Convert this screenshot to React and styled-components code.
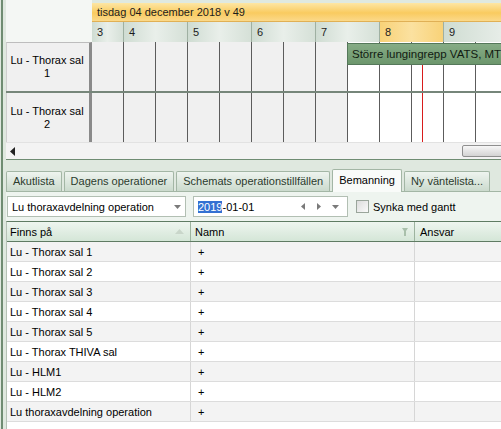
import styled, { createGlobalStyle } from "styled-components";

const GlobalStyle = createGlobalStyle`
  html, body {
    margin: 0;
    padding: 0;
  }
  body {
    width: 501px;
    height: 429px;
    overflow: hidden;
    background: #dfe8df;
    font-family: "Liberation Sans", Arial, sans-serif;
    font-size: 11px;
    color: #000;
  }
  * {
    box-sizing: border-box;
  }
`;

const Frame = styled.div`
  height: 429px;
  margin-left: 1px;
  padding-left: 3px;
  border-left: 2px solid #6f8c72;
  display: flex;
  flex-direction: column;
  overflow: hidden;
`;

/* ---------- gantt ---------- */

const Gantt = styled.div`
  display: flex;
  flex-direction: column;
  background: #f4f7f4;
  width: 600px;
`;

const GanttHead = styled.div`
  display: flex;
  height: 42px;
`;

const Corner = styled.div`
  flex: none;
  width: 86px;
  background: #f4f7f4;
`;

const Timeline = styled.div`
  flex: 1;
  display: flex;
  flex-direction: column;
  padding-top: 3px;
  background: #dfe9e0;
`;

const DateBand = styled.div`
  height: 19px;
  line-height: 19px;
  padding-left: 5px;
  white-space: nowrap;
  color: #1c1c1c;
  background: linear-gradient(#fde6a4, #f9cb60 55%, #fbd98a);
  border-bottom: 1px solid #e0b055;
`;

const HourRow = styled.div`
  display: flex;
  height: 20px;
`;

const HourCell = styled.div`
  flex: none;
  width: ${({ $w }) => $w}px;
  padding-left: 5px;
  line-height: 20px;
  color: #1c1c1c;
  border-left: ${({ $first }) => ($first ? "none" : "1px solid #9fb0a2")};
  background: ${({ $now }) =>
    $now
      ? "linear-gradient(90deg, #f8d278, #fbe1a0 50%, #f8d278)"
      : "linear-gradient(90deg, #cfdcd2, #e9efea 50%, #d5e0d7)"};
`;

const GanttRow = styled.div`
  display: flex;
  height: ${({ $h }) => $h}px;
  border-bottom: ${({ $sep }) => ($sep ? "2px solid #76867a" : "none")};
`;

const RowHeader = styled.div`
  flex: none;
  width: 86px;
  display: flex;
  align-items: center;
  justify-content: center;
  text-align: center;
  line-height: 13px;
  background: #f0f0f0;
  border-left: 1px solid #cfcfcf;
  border-top: ${({ $top }) => ($top ? "1px solid #bdbdbd" : "none")};
  border-right: 3px solid #8a8a8a;
  padding-right: 2px;
`;

const Slots = styled.div`
  position: relative;
  flex: 1;
  display: flex;
`;

const Slot = styled.div`
  flex: none;
  width: ${({ $first }) => ($first ? 31 : 32)}px;
  border-left: ${({ $first }) => ($first ? "none" : "1px solid #5c5c5c")};
  background: ${({ $work }) => ($work ? "#ffffff" : "#f0f0f0")};
`;

const EventBar = styled.div`
  position: absolute;
  left: 255px;
  top: 1px;
  right: 0;
  height: 22px;
  line-height: 20px;
  padding-left: 4px;
  white-space: nowrap;
  font-size: 11.5px;
  color: #111a11;
  background: linear-gradient(#86ac86, #6c966c);
  border: 1px solid #55785a;
`;

const NowLine = styled.div`
  position: absolute;
  left: 330px;
  top: ${({ $top }) => $top}px;
  bottom: 0;
  width: 1px;
  background: #d81c1c;
`;

const ScrollBar = styled.div`
  height: 17px;
  display: flex;
  align-items: center;
  padding-left: 4px;
  background: #f3f3f3;
  border-top: 1px solid #e2e2e2;
`;

const Thumb = styled.div`
  margin-left: auto;
  margin-right: 84px;
  width: 60px;
  height: 12px;
  border: 1px solid #8f8f8f;
  border-radius: 2px;
  background: linear-gradient(#f7f7f7, #d3d3d3);
`;

/* ---------- lower pane ---------- */

const Splitter = styled.div`
  flex: none;
  height: 11px;
  border-top: 1px solid #6f8c72;
  background: #dfe8df;
`;

const TabBar = styled.div`
  flex: none;
  display: flex;
  align-items: flex-end;
  gap: 2px;
  height: 21px;
  white-space: nowrap;
`;

const Tab = styled.div`
  flex: none;
  height: ${({ $active }) => ($active ? 23 : 20)}px;
  padding: 0 6px;
  line-height: ${({ $active }) => ($active ? 21 : 19)}px;
  color: ${({ $active }) => ($active ? "#000" : "#2b3b2d")};
  border: 1px solid #a3b6a5;
  border-bottom: none;
  border-radius: 2px 2px 0 0;
  background: ${({ $active }) =>
    $active ? "#f9fbf9" : "linear-gradient(#eef4ef, #cbdacd)"};
  margin-bottom: ${({ $active }) => ($active ? -1 : 0)}px;
  position: relative;
`;

const Toolbar = styled.div`
  flex: none;
  height: 30px;
  display: flex;
  align-items: center;
  padding-left: 1px;
  background: #eef4ef;
  border-top: 1px solid #a3b6a5;
`;

const Field = styled.div`
  flex: none;
  width: ${({ $w }) => $w}px;
  height: 21px;
  margin-right: 7px;
  display: flex;
  align-items: center;
  padding: 0 4px;
  background: #fff;
  border: 1px solid #b2bfb3;
  white-space: nowrap;
`;

const FieldText = styled.span`
  flex: 1;
`;

const Selected = styled.span`
  background: #3370d2;
  color: #fff;
`;

const Spin = styled.span`
  display: inline-flex;
  width: 16px;
  justify-content: center;
  color: #7a7a7a;
`;

const CheckBox = styled.span`
  flex: none;
  width: 13px;
  height: 13px;
  margin-left: 1px;
  margin-right: 4px;
  border: 1px solid #9aa59b;
  background: linear-gradient(135deg, #dcdcdc, #fafafa);
`;

const Label = styled.span`
  white-space: nowrap;
`;

const Grid = styled.div`
  flex: 1;
  background: #fff;
  border-top: 1px solid #5f7b63;
  border-left: 1px solid #b5c2b6;
  width: 600px;
`;

const GridRow = styled.div`
  display: grid;
  grid-template-columns: 184px 224px 1fr;
  height: 20px;
  background: ${({ $odd }) => ($odd ? "#f3f3f3" : "#ffffff")};
  border-bottom: 1px solid #dcdcdc;
`;

const HeaderRow = styled(GridRow)`
  background: linear-gradient(#eef5ef, #d4e6d7);
  border-bottom: 1px solid #5f7b63;
`;

const Cell = styled.div`
  display: flex;
  align-items: center;
  padding-left: ${({ $pad }) => $pad ?? 3}px;
  padding-right: 6px;
  white-space: nowrap;
  border-right: 1px solid ${({ $head }) => ($head ? "#9db39f" : "#d6d6d6")};
`;

const HeadText = styled.span`
  flex: 1;
`;

const ArrowLeft = () => (
  <svg width="6" height="9" viewBox="0 0 6 9">
    <path d="M5 0 L0 4.5 L5 9 Z" fill="#222" />
  </svg>
);

const SmallTri = ({ dir, color = "#7a7a7a" }) => {
  const paths = {
    left: "M4 0 L0 3.5 L4 7 Z",
    right: "M0 0 L4 3.5 L0 7 Z",
    down: "M0 0 L7 0 L3.5 4 Z",
  };
  const size = dir === "down" ? [7, 4] : [4, 7];
  return (
    <svg width={size[0]} height={size[1]} viewBox={`0 0 ${size[0]} ${size[1]}`}>
      <path d={paths[dir]} fill={color} />
    </svg>
  );
};

const SortUp = () => (
  <svg width="9" height="5" viewBox="0 0 9 5">
    <path d="M4.5 0 L9 5 L0 5 Z" fill="#c9d6ca" />
  </svg>
);

const Funnel = () => (
  <svg width="6" height="8" viewBox="0 0 6 8">
    <path d="M0 0 H6 L4 3 V8 H2 V3 Z" fill="#a9c0ab" />
  </svg>
);

const hours = [
  { label: "3", w: 31 },
  { label: "4", w: 64 },
  { label: "5", w: 64 },
  { label: "6", w: 64 },
  { label: "7", w: 64 },
  { label: "8", w: 64, now: true },
  { label: "9", w: 128 },
];

const slots = Array.from({ length: 16 }, (_, i) => i);

const rooms = [
  "Lu - Thorax sal 1",
  "Lu - Thorax sal 2",
  "Lu - Thorax sal 3",
  "Lu - Thorax sal 4",
  "Lu - Thorax sal 5",
  "Lu - Thorax THIVA sal",
  "Lu - HLM1",
  "Lu - HLM2",
  "Lu thoraxavdelning operation",
];

const tabs = [
  "Akutlista",
  "Dagens operationer",
  "Schemats operationstillfällen",
  "Bemanning",
  "Ny väntelista...",
];

const ganttRows = [
  { name: "Lu - Thorax sal", no: "1", h: 51, sep: true, event: true, lineTop: 23 },
  { name: "Lu - Thorax sal", no: "2", h: 49, sep: false, event: false, lineTop: 0 },
];

export default function App() {
  return (
    <>
      <GlobalStyle />
      <Frame>
        <Gantt>
          <GanttHead>
            <Corner />
            <Timeline>
              <DateBand>tisdag 04 december 2018 v 49</DateBand>
              <HourRow>
                {hours.map((h, i) => (
                  <HourCell key={h.label} $w={h.w} $now={h.now} $first={i === 0}>
                    {h.label}
                  </HourCell>
                ))}
              </HourRow>
            </Timeline>
          </GanttHead>
          {ganttRows.map((r, ri) => (
            <GanttRow key={r.no} $h={r.h} $sep={r.sep}>
              <RowHeader $top={ri === 0}>
                {r.name}
                <br />
                {r.no}
              </RowHeader>
              <Slots>
                {slots.map((i) => (
                  <Slot key={i} $first={i === 0} $work={i >= 8} />
                ))}
                {r.event && <EventBar>Större lungingrepp VATS, MT</EventBar>}
                <NowLine $top={r.lineTop} />
              </Slots>
            </GanttRow>
          ))}
          <ScrollBar>
            <ArrowLeft />
            <Thumb />
          </ScrollBar>
        </Gantt>

        <Splitter />
        <TabBar>
          {tabs.map((t) => (
            <Tab key={t} $active={t === "Bemanning"}>
              {t}
            </Tab>
          ))}
        </TabBar>
        <Toolbar>
          <Field $w={179}>
            <FieldText>Lu thoraxavdelning operation</FieldText>
            <SmallTri dir="down" />
          </Field>
          <Field $w={155}>
            <FieldText>
              <Selected>2019</Selected>-01-01
            </FieldText>
            <Spin>
              <SmallTri dir="left" />
            </Spin>
            <Spin>
              <SmallTri dir="right" />
            </Spin>
            <Spin>
              <SmallTri dir="down" />
            </Spin>
          </Field>
          <CheckBox />
          <Label>Synka med gantt</Label>
        </Toolbar>
        <Grid>
          <HeaderRow>
            <Cell $head>
              <HeadText>Finns på</HeadText>
              <SortUp />
            </Cell>
            <Cell $head $pad={4}>
              <HeadText>Namn</HeadText>
              <Funnel />
            </Cell>
            <Cell $head $pad={5}>
              Ansvar
            </Cell>
          </HeaderRow>
          {rooms.map((room, i) => (
            <GridRow key={room} $odd={i % 2 === 0}>
              <Cell>{room}</Cell>
              <Cell $pad={7}>+</Cell>
              <Cell />
            </GridRow>
          ))}
        </Grid>
      </Frame>
    </>
  );
}
